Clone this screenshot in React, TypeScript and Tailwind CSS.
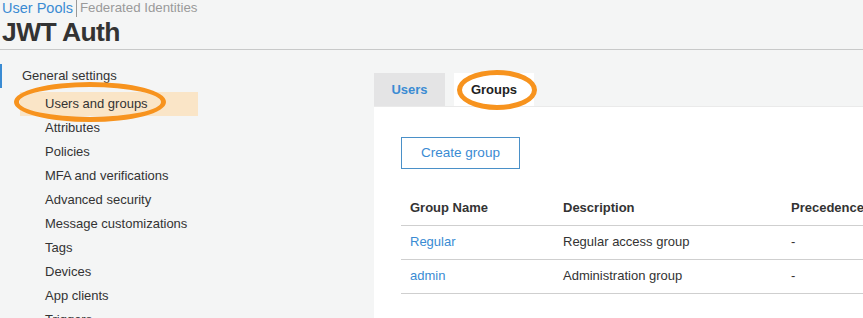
import React from "react";

const navItems = [
  "Attributes",
  "Policies",
  "MFA and verifications",
  "Advanced security",
  "Message customizations",
  "Tags",
  "Devices",
  "App clients",
  "Triggers",
];

const groups = [
  { name: "Regular", description: "Regular access group", precedence: "-" },
  { name: "admin", description: "Administration group", precedence: "-" },
];

export default function App() {
  return (
    <div className="w-[863px] h-[318px] overflow-hidden bg-[#f4f5f5] text-[#333] font-['Liberation_Sans',Arial,sans-serif]">
      {/* Header */}
      <div className="border-b border-[#c8c9c9] pl-[2px]">
        <div className="flex items-center h-[16px] leading-[16px]">
          <span className="text-[14.5px] text-[#3a8bd3]">User Pools</span>
          <span className="ml-[3px] mr-[3px] h-[17px] w-px bg-[#999]" />
          <span className="text-[13.3px] text-[#9a9a9a]">Federated Identities</span>
        </div>
        <h1 className="text-[26.5px] leading-[33px] font-bold tracking-[-0.6px] text-[#333]">JWT Auth</h1>
      </div>

      <div className="flex">
        {/* Sidebar */}
        <div className="w-[374px] shrink-0 pt-[14px] text-[13px]">
          <div className="h-[24px] flex items-center pl-[20px] border-l-2 border-[#3a8bd3]">
            General settings
          </div>
          <div className="relative mt-[4px] h-[24px] w-[178px] ml-[20px] pl-[25px] flex items-center bg-[#fae5c7]">
            <span className="relative z-10">Users and groups</span>
            <div className="absolute left-[-6px] top-[-10px] w-[152px] h-[40px] rounded-[50%] border-[5px] border-[#f7931e]" />
          </div>
          {navItems.map((item) => (
            <div key={item} className="h-[24px] flex items-center pl-[45px]">
              {item}
            </div>
          ))}
        </div>

        {/* Main */}
        <div className="flex-1 pt-[23px] min-w-0">
          <div className="flex items-end gap-[9px] text-[13px] font-bold">
            <div className="w-[71px] h-[33px] flex items-center justify-center bg-[#e4e4e5] text-[#3a8bd3]">
              Users
            </div>
            <div className="relative w-[80px] h-[33px] flex items-center justify-center bg-white text-[#222]">
              <span className="relative z-10">Groups</span>
              <div className="absolute left-[3px] top-[-3px] w-[80px] h-[40px] rounded-[50%] border-[5px] border-[#f7931e]" />
            </div>
          </div>
          <div className="bg-white border-t border-[#eaeaea] h-[220px] pl-[27px] pt-[30px] overflow-hidden">
            <button className="w-[119px] h-[32px] border border-[#4a90c8] text-[#3a8bd3] text-[13.5px]">
              Create group
            </button>
            <table className="mt-[22px] w-[520px] text-[13px] border-collapse">
              <thead>
                <tr className="h-[34px] border-b border-[#cfcfcf]">
                  <th className="w-[153px] text-left font-bold pl-[9px]">Group Name</th>
                  <th className="w-[228px] text-left font-bold pl-[9px]">Description</th>
                  <th className="text-left font-bold pl-[9px]">Precedence</th>
                </tr>
              </thead>
              <tbody>
                {groups.map((g) => (
                  <tr key={g.name} className="h-[34px] border-b border-[#cfcfcf]">
                    <td className="pl-[9px] text-[#3a8bd3]">{g.name}</td>
                    <td className="pl-[9px]">{g.description}</td>
                    <td className="pl-[9px]">{g.precedence}</td>
                  </tr>
                ))}
              </tbody>
            </table>
          </div>
        </div>
      </div>
    </div>
  );
}
